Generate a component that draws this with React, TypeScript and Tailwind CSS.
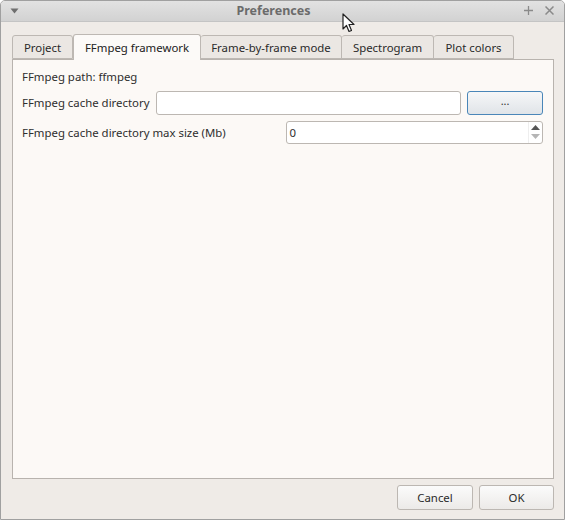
import React from "react";

const font = { fontFamily: '"Noto Sans", "Open Sans", sans-serif' };

const tabs = ["Project", "FFmpeg framework", "Frame-by-frame mode", "Spectrogram", "Plot colors"];
const tabWidths = ["w-[61px]", "w-[128px]", "w-[141px]", "w-[92px]", "w-[80px]"];

function Cursor() {
  return (
    <svg className="absolute left-[341px] top-[12px]" width="13" height="20" viewBox="0 0 13 20">
      <path d="M1 1 L1 16 L4.5 12.5 L7 18.5 L9.5 17.5 L7 11.5 L12 11.5 Z" fill="#fff" stroke="#222" strokeWidth="1.2" strokeLinejoin="round" />
    </svg>
  );
}

export default function App() {
  return (
    <div className="relative w-[565px] h-[520px] bg-[#efebe7] text-[#2e2e2e] text-[11.4px] whitespace-nowrap flex flex-col border border-[#a0a0a0] rounded-t-[5px] overflow-hidden" style={font}>
      {/* title bar */}
      <div className="h-[22px] flex items-center px-[9px] bg-gradient-to-b from-[#e2e2e2] to-[#d2d2d2] border-b border-[#c4c4c4]">
        <svg width="9" height="6" viewBox="0 0 9 6">
          <path d="M0.5 0.5 L8.5 0.5 L4.5 5.5 Z" fill="#6e6e6e" />
        </svg>
        <div className="flex-1 text-center font-bold text-[12.5px] text-[#6b6b6b] pl-[4px] pt-[1px]">Preferences</div>
        <div className="flex items-center gap-[12px] text-[#888] mr-[1px]">
          <svg width="9" height="9" viewBox="0 0 9 9">
            <path d="M4.5 0 V9 M0 4.5 H9" stroke="#8a8a8a" strokeWidth="1.3" />
          </svg>
          <svg width="9" height="9" viewBox="0 0 9 9">
            <path d="M0.5 0.5 L8.5 8.5 M8.5 0.5 L0.5 8.5" stroke="#8a8a8a" strokeWidth="1.5" />
          </svg>
        </div>
      </div>
      <Cursor />

      {/* body */}
      <div className="flex-1 flex flex-col pl-[11px] pr-[10px] pt-[11px] pb-[10px]">
        <div className="flex items-end h-[26px] relative z-10">
          {tabs.map((t, i) =>
            i === 1 ? (
              <div
                key={t}
                className={`${tabWidths[i]} h-[26px] -mb-px bg-[#fcfaf8] border border-[#bdb8b3] border-b-0 rounded-t-[3px] flex items-center justify-center text-[#222]`}
              >
                {t}
              </div>
            ) : (
              <div
                key={t}
                className={`${tabWidths[i]} h-[24px] pt-[2px] bg-[#ebe7e3] border border-[#bdb8b3] ${i === 0 ? "" : "border-l-0"} rounded-t-[3px] flex items-center justify-center text-[#2a2a2a]`}
              >
                {t}
              </div>
            )
          )}
        </div>
        <div className="w-[542px] h-[420px] bg-[#fcf9f6] border border-[#b8b3ae] pl-[9px] pr-[10px] pt-[8px] flex flex-col">
          <div className="h-[18px] flex items-center">FFmpeg path: ffmpeg</div>
          <div className="flex items-center mt-[5px] h-[24px]">
            <span className="w-[134px]">FFmpeg cache directory</span>
            <div className="w-[306px] h-[24px] bg-white border border-[#bcb7b2] rounded-[3px]" />
            <button className="ml-[6px] w-[76px] h-[24px] rounded-[3px] border border-[#4a86b8] bg-gradient-to-b from-[#f6f7f8] to-[#e0e4e8] text-[11px] text-[#333] leading-none pb-[4px]">
              ...
            </button>
          </div>
          <div className="flex items-center mt-[6px] h-[23px]">
            <span className="w-[264px]">FFmpeg cache directory max size (Mb)</span>
            <div className="w-[258px] h-[23px] bg-white border border-[#bcb7b2] rounded-[3px] flex items-center">
              <span className="flex-1 pl-[3px]">0</span>
              <div className="w-[14px] h-full flex flex-col items-center justify-center gap-[4px] border-l border-[#eeeeee]">
                <svg width="9" height="5" viewBox="0 0 9 5">
                  <path d="M0 5 L4.5 0 L9 5 Z" fill="#555" />
                </svg>
                <svg width="9" height="5" viewBox="0 0 9 5">
                  <path d="M0 0 L9 0 L4.5 5 Z" fill="#b5b5b5" />
                </svg>
              </div>
            </div>
          </div>
        </div>

        <div className="flex justify-end gap-[6px] mt-[6px]">
          <button className="w-[76px] h-[25px] rounded-[3px] border border-[#bcb7b2] bg-gradient-to-b from-[#fbfbfb] to-[#eceae8] text-[#2a2a2a] pt-[1px]">
            Cancel
          </button>
          <button className="w-[75px] h-[25px] rounded-[3px] border border-[#bcb7b2] bg-gradient-to-b from-[#fbfbfb] to-[#eceae8] text-[#2a2a2a] pt-[1px]">
            OK
          </button>
        </div>
      </div>
    </div>
  );
}
